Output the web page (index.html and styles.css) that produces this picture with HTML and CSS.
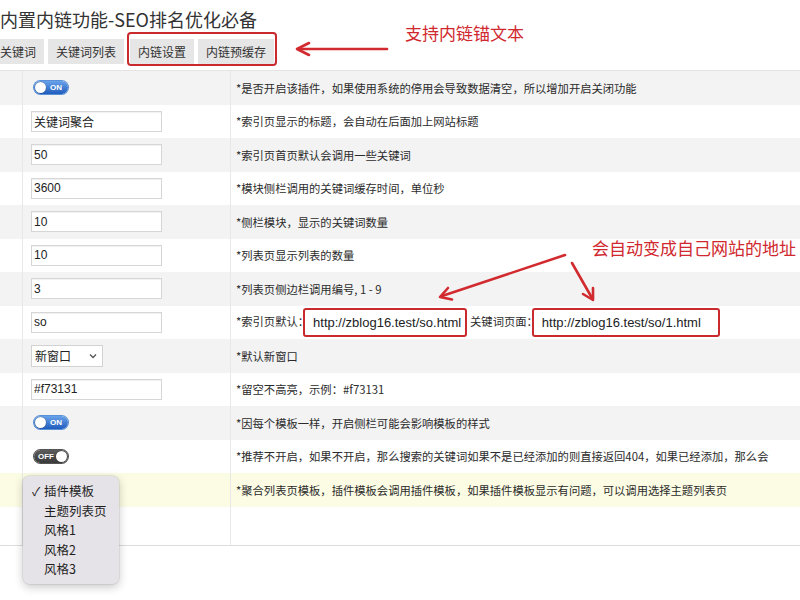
FILE: index.html
```html
<!DOCTYPE html>
<html lang="zh-CN">
<head>
<meta charset="utf-8">
<title>内链设置</title>
<link rel="stylesheet" href="styles.css">
</head>
<body>
<div class="page">
  <h1 class="title">内置内链功能-SEO排名优化必备</h1>
  <nav class="tabs">
    <span class="tab">关键词</span>
    <span class="tab">关键词列表</span>
    <div class="tab-group">
      <span class="tab">内链设置</span>
      <span class="tab">内链预缓存</span>
    </div>
  </nav>
  <table class="settings">
    <colgroup><col class="c1"><col class="c2"><col class="c3"></colgroup>
    <tbody>
      <tr class="odd"><td class="side"></td><td class="ctl"><span class="toggle on"><i class="knob"></i><b>ON</b></span></td><td class="desc">*是否开启该插件，如果使用系统的停用会导致数据清空，所以增加开启关闭功能</td></tr>
      <tr><td class="side"></td><td class="ctl"><input class="field" value="关键词聚合" readonly></td><td class="desc">*索引页显示的标题，会自动在后面加上网站标题</td></tr>
      <tr class="odd"><td class="side"></td><td class="ctl"><input class="field" value="50" readonly></td><td class="desc">*索引页首页默认会调用一些关键词</td></tr>
      <tr><td class="side"></td><td class="ctl"><input class="field" value="3600" readonly></td><td class="desc">*模块侧栏调用的关键词缓存时间，单位秒</td></tr>
      <tr class="odd"><td class="side"></td><td class="ctl"><input class="field" value="10" readonly></td><td class="desc">*侧栏模块，显示的关键词数量</td></tr>
      <tr><td class="side"></td><td class="ctl"><input class="field" value="10" readonly></td><td class="desc">*列表页显示列表的数量</td></tr>
      <tr class="odd"><td class="side"></td><td class="ctl"><input class="field" value="3" readonly></td><td class="desc">*列表页侧边栏调用编号, 1 - 9</td></tr>
      <tr><td class="side"></td><td class="ctl"><input class="field" value="so" readonly></td><td class="desc">*索引页默认：<span class="url u1">http://zblog16.test/so.html</span>关键词页面：<span class="url u2">http://zblog16.test/so/1.html</span></td></tr>
      <tr class="odd"><td class="side"></td><td class="ctl"><span class="select">新窗口<svg class="chev" width="8" height="6" viewBox="0 0 8 6"><path d="M1 1.5 L4 4.5 L7 1.5" fill="none" stroke="#555" stroke-width="1.3"/></svg></span></td><td class="desc">*默认新窗口</td></tr>
      <tr><td class="side"></td><td class="ctl"><input class="field" value="#f73131" readonly></td><td class="desc">*留空不高亮，示例：#f73131</td></tr>
      <tr class="odd"><td class="side"></td><td class="ctl"><span class="toggle on"><i class="knob"></i><b>ON</b></span></td><td class="desc">*因每个模板一样，开启侧栏可能会影响模板的样式</td></tr>
      <tr><td class="side"></td><td class="ctl"><span class="toggle off"><i class="knob"></i><b>OFF</b></span></td><td class="desc">*推荐不开启，如果不开启，那么搜索的关键词如果不是已经添加的则直接返回404，如果已经添加，那么会</td></tr>
      <tr class="hl"><td class="side"></td><td class="ctl anchor">
        <ul class="menu">
          <li><span class="check">✓</span>插件模板</li>
          <li>主题列表页</li>
          <li>风格1</li>
          <li>风格2</li>
          <li>风格3</li>
        </ul>
      </td><td class="desc">*聚合列表页模板，插件模板会调用插件模板，如果插件模板显示有问题，可以调用选择主题列表页</td></tr>
      <tr class="last"><td class="side"></td><td class="ctl"></td><td class="desc"></td></tr>
    </tbody>
  </table>

  <div class="note note-top">支持内链锚文本</div>
  <div class="note note-mid">会自动变成自己网站的地址</div>
  <svg class="arrows" width="800" height="600" viewBox="0 0 800 600">
    <g fill="none" stroke="#d12a2f" stroke-width="2.6" stroke-linecap="round" stroke-linejoin="round">
      <path d="M387 49 L298 49"/>
      <path d="M309 43 L297 49 L309 55"/>
      <path d="M565 255 L442 296"/>
      <path d="M452 299.4 L440 297 L448 288"/>
      <path d="M572 263 L592 298"/>
      <path d="M593 288 L593 300 L583 294"/>
    </g>
  </svg>
</div>
</body>
</html>
```

FILE: styles.css
```css
html, body {
  margin: 0;
  padding: 0;
  background: #fff;
}
body {
  width: 800px;
  height: 600px;
  overflow: hidden;
  font-family: "Noto Sans CJK SC", "Noto Sans", sans-serif;
  color: #333;
}
.page {
  position: relative;
  width: 800px;
  height: 600px;
  overflow: hidden;
}
.title {
  margin: 0;
  padding-top: 7px;
  font-size: 18px;
  line-height: 24px;
  font-weight: normal;
  color: #333;
  white-space: nowrap;
}
.tabs {
  display: flex;
  align-items: flex-end;
  gap: 4px;
  margin: 1px 0 0 -8px;
}
.tab {
  display: block;
  height: 25px;
  line-height: 25px;
  padding: 0 8px;
  background: #e6e6e6;
  font-size: 12px;
  color: #333;
  white-space: nowrap;
}
.tab-group {
  display: flex;
  gap: 4px;
  padding: 5px 1px 0;
  border: 2px solid #c92a2e;
  border-radius: 4px;
  margin-bottom: -2px;
  margin-left: -1px;
}
.settings {
  margin-top: 6px;
  width: 800px;
  border-collapse: separate;
  border-spacing: 0;
  table-layout: fixed;
  border-top: 1px solid #e4e4e4;
  border-bottom: 1px solid #dcdcdc;
}
col.c1 { width: 23px; }
col.c2 { width: 208px; }
.settings td {
  padding: 0;
  height: 33.5px;
  vertical-align: middle;
  white-space: nowrap;
  background: #fff;
}
.settings tr.odd td { background: #f3f3f3; }
.settings tr.hl td { background: #fcfce4; }
.settings tr.last td { height: 38px; }
.side, .ctl {
  border-right: 1px solid #e8e8e8;
}
.desc {
  padding-left: 5px !important;
  font-size: 11.3px;
  color: #2b2b2b;
}
.field {
  display: block;
  box-sizing: border-box;
  width: 131px;
  height: 21px;
  margin: 0 0 0 8px;
  padding: 0 2px;
  border: 1px solid #d6d6d6;
  border-radius: 0;
  background: #fff;
  box-shadow: inset 0 1px 1px rgba(0,0,0,0.06);
  font-family: "Liberation Sans", "Noto Sans CJK SC", sans-serif;
  font-size: 12px;
  color: #222;
  outline: none;
}
.select {
  display: flex;
  align-items: center;
  justify-content: space-between;
  box-sizing: border-box;
  width: 72px;
  height: 22px;
  margin-left: 8px;
  padding: 0 5px 0 3px;
  border: 1px solid #d2d2d2;
  background: #fff;
  font-size: 12px;
  color: #222;
}
.toggle {
  display: block;
  position: relative;
  width: 34px;
  height: 13px;
  border-radius: 7px;
  margin-left: 11px;
}
.toggle.on {
  background: linear-gradient(#6aa3ea, #1f5cbc);
  box-shadow: 0 0 0 1px #5a90d8;
}
.toggle.off {
  background: linear-gradient(#5c5c5c, #3a3a3a);
  box-shadow: 0 0 0 1px #555;
}
.knob {
  position: absolute;
  top: 1px;
  width: 11px;
  height: 11px;
  border-radius: 50%;
  background: #fff;
  box-shadow: 0 0 1px rgba(0,0,0,0.6);
}
.on .knob { left: 1px; }
.off .knob { right: 1px; }
.toggle b {
  position: absolute;
  top: 0;
  font: bold 8px/13px "Liberation Sans", sans-serif;
  color: #fff;
}
.on b { right: 6px; }
.off b { left: 4px; }
.url {
  display: inline-block;
  box-sizing: border-box;
  height: 29px;
  line-height: 25px;
  padding-left: 8px;
  border: 2px solid #c92a2e;
  border-radius: 3px;
  background: #fff;
  margin-left: -6px;
  margin-right: 3px;
  vertical-align: middle;
  font: 13px/25px "Liberation Sans", sans-serif;
  color: #222;
}
.u1 { width: 164px; }
.u2 { width: 188px; }
.anchor { position: relative; }
.menu {
  position: absolute;
  top: 3px;
  left: 0;
  z-index: 3;
  box-sizing: border-box;
  width: 96px;
  margin: 0;
  padding: 5px 0;
  list-style: none;
  background: #e6e3e8;
  border-radius: 6px;
  box-shadow: 0 3px 10px rgba(0,0,0,0.22), 0 0 0 0.5px rgba(0,0,0,0.12);
  font-size: 12.5px;
  line-height: 19.6px;
  color: #1e1e1e;
}
.menu li {
  position: relative;
  padding-left: 21px;
}
.check {
  position: absolute;
  left: 9px;
  top: 0;
  font-size: 12px;
}
.note {
  position: absolute;
  color: #d0282e;
  font-size: 17px;
  line-height: 20px;
  white-space: nowrap;
}
.note-top { left: 405px; top: 23px; }
.note-mid { left: 592px; top: 238px; }
.arrows {
  position: absolute;
  top: 0;
  left: 0;
  pointer-events: none;
}
```
